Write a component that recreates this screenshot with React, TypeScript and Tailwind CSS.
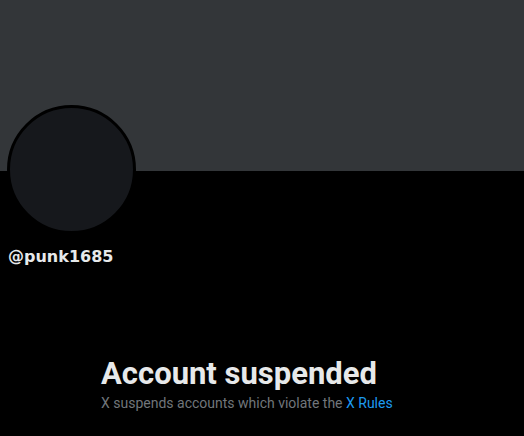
export default function App() {
  return (
    <div className="w-[524px] h-[436px] overflow-hidden bg-black font-['Roboto','Liberation_Sans',sans-serif]">
      <div className="h-[171px] bg-[#333639]" />
      <div className="px-[7px]">
        <div className="-mt-[66px] w-[129px] h-[129px] rounded-full border-[3px] border-black bg-[#16181c]" />
        <div className="mt-[13px] pl-[1px] text-[16px] leading-5 font-bold text-[#e7e9ea] font-['DejaVu_Sans',sans-serif]">
          @punk1685
        </div>
      </div>
      <div className="mt-[89px] pl-[101px]">
        <h1 className="text-[31px] leading-9 font-bold text-[#e7e9ea]">
          Account suspended
        </h1>
        <p className="mt-[1px] text-[14px] leading-5 text-[#71767b]">
          X suspends accounts which violate the <span className="text-[#1d9bf0]">X Rules</span>
        </p>
      </div>
    </div>
  );
}
